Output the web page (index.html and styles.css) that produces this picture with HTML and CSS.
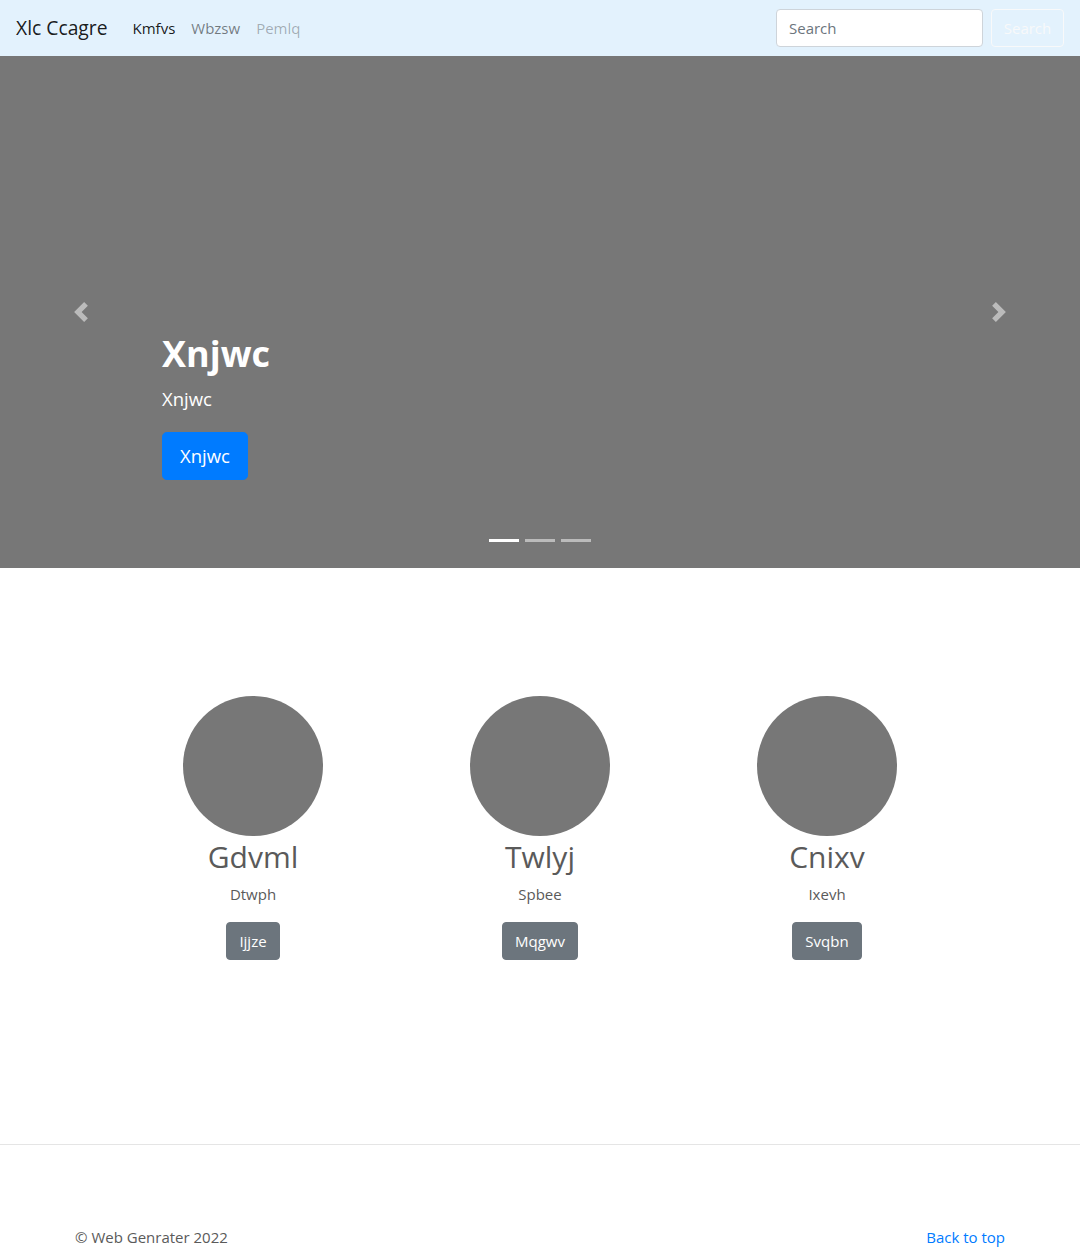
FILE: index.html
```html
<!DOCTYPE html>
<html lang="en">
<head>
<meta charset="utf-8">
<title>Xlc Ccagre</title>
<link rel="stylesheet" href="styles.css">
</head>
<body>
<header class="navbar">
  <a class="brand" href="#">Xlc Ccagre</a>
  <ul class="nav">
    <li><a class="nav-link active" href="#">Kmfvs</a></li>
    <li><a class="nav-link" href="#">Wbzsw</a></li>
    <li><a class="nav-link disabled" href="#">Pemlq</a></li>
  </ul>
  <form class="search">
    <input class="search-input" type="text" placeholder="Search">
    <button class="search-btn" type="button">Search</button>
  </form>
</header>

<main>
  <section class="carousel">
    <ol class="indicators">
      <li class="active"></li>
      <li></li>
      <li></li>
    </ol>
    <div class="slide">
      <div class="caption">
        <h1 class="caption-title">Xnjwc</h1>
        <p class="caption-text">Xnjwc</p>
        <a class="btn-primary-lg" href="#">Xnjwc</a>
      </div>
    </div>
    <a class="control control-prev" href="#">
      <svg class="control-icon" viewBox="0 0 8 8" width="20" height="20"><path d="M5.25 0l-4 4 4 4 1.5-1.5L4.25 4l2.5-2.5L5.25 0z" fill="#fff"/></svg>
    </a>
    <a class="control control-next" href="#">
      <svg class="control-icon" viewBox="0 0 8 8" width="20" height="20"><path d="M2.75 0l-1.5 1.5L3.75 4l-2.5 2.5L2.75 8l4-4-4-4z" fill="#fff"/></svg>
    </a>
  </section>

  <section class="marketing">
    <div class="col">
      <svg class="avatar" viewBox="0 0 140 140" width="140" height="140"><circle cx="70" cy="70" r="70" fill="#777"/></svg>
      <h2 class="col-title">Gdvml</h2>
      <p class="col-text">Dtwph</p>
      <a class="btn-secondary" href="#">Ijjze</a>
    </div>
    <div class="col">
      <svg class="avatar" viewBox="0 0 140 140" width="140" height="140"><circle cx="70" cy="70" r="70" fill="#777"/></svg>
      <h2 class="col-title">Twlyj</h2>
      <p class="col-text">Spbee</p>
      <a class="btn-secondary" href="#">Mqgwv</a>
    </div>
    <div class="col">
      <svg class="avatar" viewBox="0 0 140 140" width="140" height="140"><circle cx="70" cy="70" r="70" fill="#777"/></svg>
      <h2 class="col-title">Cnixv</h2>
      <p class="col-text">Ixevh</p>
      <a class="btn-secondary" href="#">Svqbn</a>
    </div>
  </section>

  <hr class="divider">

  <footer class="footer">
    <p class="copy">© Web Genrater 2022</p>
    <p class="top"><a href="#">Back to top</a></p>
  </footer>
</main>
</body>
</html>
```

FILE: styles.css
```css
* { box-sizing: border-box; }

html, body {
  margin: 0;
  padding: 0;
}

body {
  font-family: "Open Sans", "Noto Sans", "Liberation Sans", sans-serif;
  font-size: 15px;
  line-height: 1.5;
  color: #5a5a5a;
  background: #fff;
}

a { text-decoration: none; }

/* Navbar */
.navbar {
  display: flex;
  align-items: center;
  height: 56px;
  padding: 8px 16px;
  background: #e3f2fd;
}

.brand {
  font-size: 19.3px;
  line-height: 30px;
  padding: 5px 0;
  margin-right: 17px;
  color: rgba(0, 0, 0, .9);
}

.nav {
  display: flex;
  list-style: none;
  margin: 0;
  padding: 0;
  flex: 1;
}

.nav-link {
  display: block;
  padding: 8px;
  font-size: 15px;
  line-height: 24px;
  color: rgba(0, 0, 0, .5);
}

.nav-link.active { color: rgba(0, 0, 0, .9); }
.nav-link.disabled { color: rgba(0, 0, 0, .3); }

.search {
  display: flex;
  align-items: center;
}

.search-input {
  width: 207px;
  height: 38px;
  padding: 6px 12px;
  margin-right: 8px;
  font-family: inherit;
  font-size: 15px;
  color: #495057;
  background: #fff;
  border: 1px solid #ced4da;
  border-radius: 4px;
}

.search-input::placeholder { color: #6c757d; }

.search-btn {
  width: 73px;
  height: 38px;
  padding: 6px 0;
  font-family: inherit;
  font-size: 15px;
  color: #f8f9fa;
  background: transparent;
  border: 1px solid #f8f9fa;
  border-radius: 4px;
}

/* Carousel */
.carousel {
  position: relative;
  height: 512px;
  background: #777;
}

.slide {
  height: 100%;
  display: flex;
  flex-direction: column;
  justify-content: flex-end;
  padding: 0 15% 88px;
}

.caption {
  color: #fff;
  text-align: left;
}

.caption-title {
  margin: 0 0 6px;
  font-size: 36px;
  line-height: 48px;
  font-weight: 700;
}

.caption-text {
  margin: 0 0 18px;
  font-size: 18.5px;
  line-height: 30px;
}

.btn-primary-lg {
  display: inline-block;
  height: 48px;
  padding: 8px 17px;
  font-size: 18.5px;
  line-height: 30px;
  color: #fff;
  background: #007bff;
  border: 1px solid #007bff;
  border-radius: 4.8px;
}

.indicators {
  position: absolute;
  left: 0;
  right: 0;
  bottom: 26px;
  display: flex;
  justify-content: center;
  list-style: none;
  margin: 0;
  padding: 0;
}

.indicators li {
  width: 30px;
  height: 3px;
  margin: 0 3px;
  background: #fff;
  opacity: .5;
}

.indicators li.active { opacity: 1; }

.control {
  position: absolute;
  top: 0;
  bottom: 0;
  width: 15%;
  display: flex;
  align-items: center;
  justify-content: center;
  opacity: .5;
}

.control-prev { left: 0; }
.control-next { right: 0; }

.control-icon { display: block; }

/* Marketing */
.marketing {
  display: grid;
  grid-template-columns: repeat(3, 287px);
  justify-content: center;
  padding-top: 128px;
  text-align: center;
}

.avatar {
  display: block;
  margin: 0 auto;
}

.col-title {
  margin: 2px 0 6px;
  font-size: 30px;
  line-height: 38px;
  font-weight: 400;
  color: #5a5a5a;
}

.col-text {
  margin: 0 0 16px;
  font-size: 15px;
  line-height: 24px;
}

.btn-secondary {
  display: inline-block;
  height: 38px;
  padding: 6px 12px;
  font-size: 15px;
  line-height: 24px;
  color: #fff;
  background: #6c757d;
  border: 1px solid #6c757d;
  border-radius: 4px;
}

/* Divider + footer */
.divider {
  margin: 184px 0 0;
  border: 0;
  border-top: 1px solid rgba(0, 0, 0, .1);
}

.footer {
  width: 960px;
  margin: 0 auto;
  padding: 80px 15px 0;
  display: flex;
  justify-content: space-between;
}

.footer p {
  margin: 0;
  font-size: 15px;
  line-height: 24px;
}

.top a { color: #007bff; }
```
